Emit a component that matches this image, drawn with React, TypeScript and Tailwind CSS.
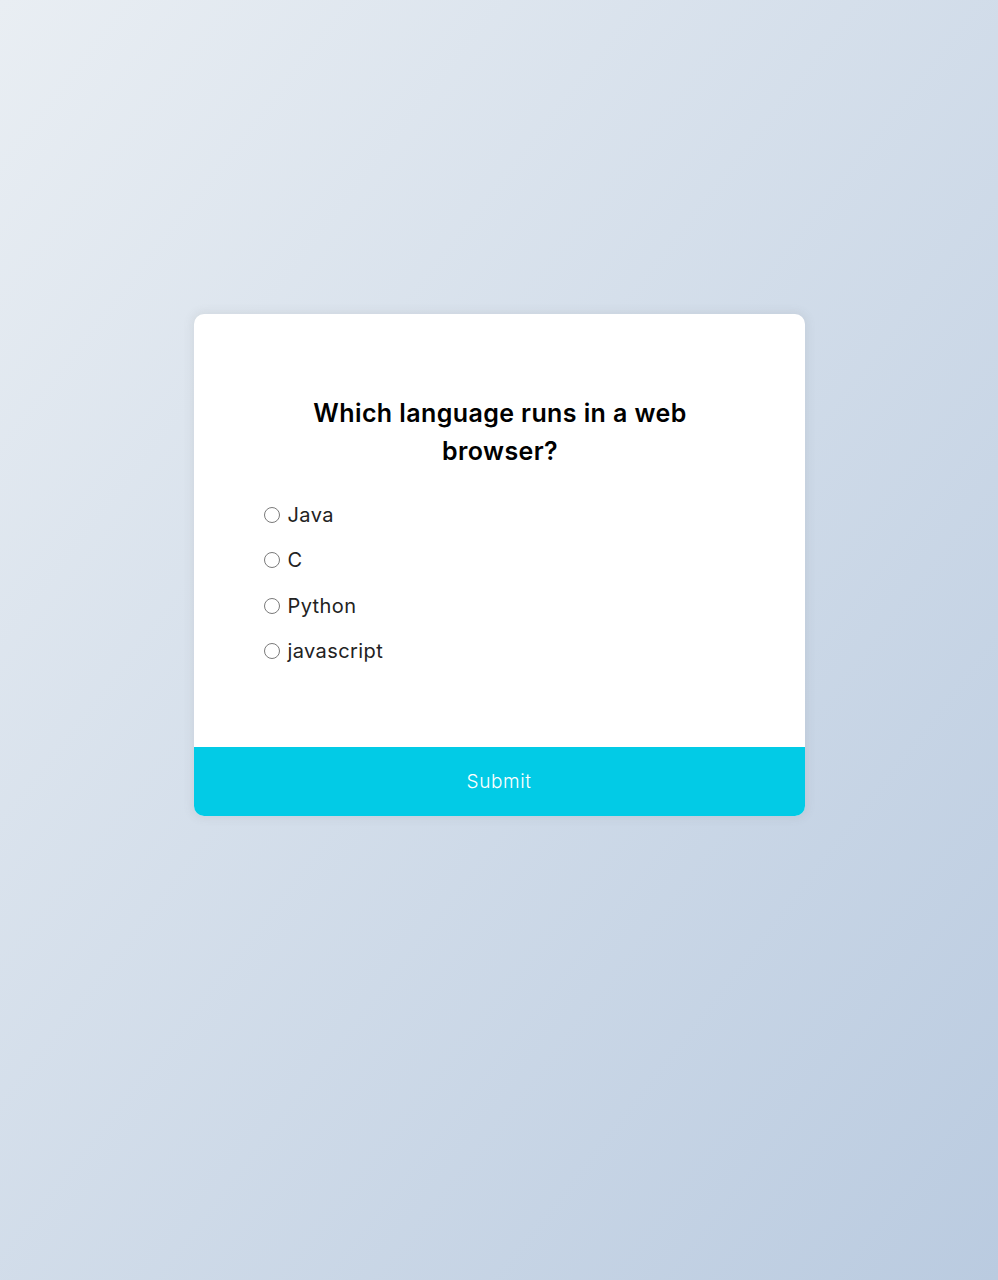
import React from "react";

const options = ["Java", "C", "Python", "javascript"];

export default function App() {
  return (
    <div
      className="w-full min-h-[1280px] bg-[linear-gradient(to_bottom_right,#e9eef3,#bacbe0)] flex justify-center pt-[314px]"
      style={{ fontFamily: "Inter, 'Noto Sans', sans-serif" }}
    >
      <div className="w-[611px] h-[502px] bg-white rounded-[10px] overflow-hidden shadow-[0_0_10px_2px_rgba(100,100,100,0.1)] flex flex-col">
        <div className="flex-1 pt-[81px] pl-[70px] pr-[68px]">
          <h2 className="text-center text-[25px] leading-[37.5px] font-semibold text-black tracking-[0.4px]">
            Which language runs in a web
            <br />
            browser?
          </h2>
          <ul className="mt-[22px]">
            {options.map((o) => (
              <li key={o} className="h-[45.5px] flex items-center">
                <span className="w-[16px] h-[16px] rounded-full border border-[#7a7a7a] bg-white shrink-0" />
                <span className="ml-[8px] text-[20px] text-[#222] leading-none tracking-[0.4px]">{o}</span>
              </li>
            ))}
          </ul>
        </div>
        <button className="h-[69px] w-full pt-[2px] bg-[#02cbe6] text-white font-light text-[19px] tracking-[0.6px]">
          Submit
        </button>
      </div>
    </div>
  );
}
